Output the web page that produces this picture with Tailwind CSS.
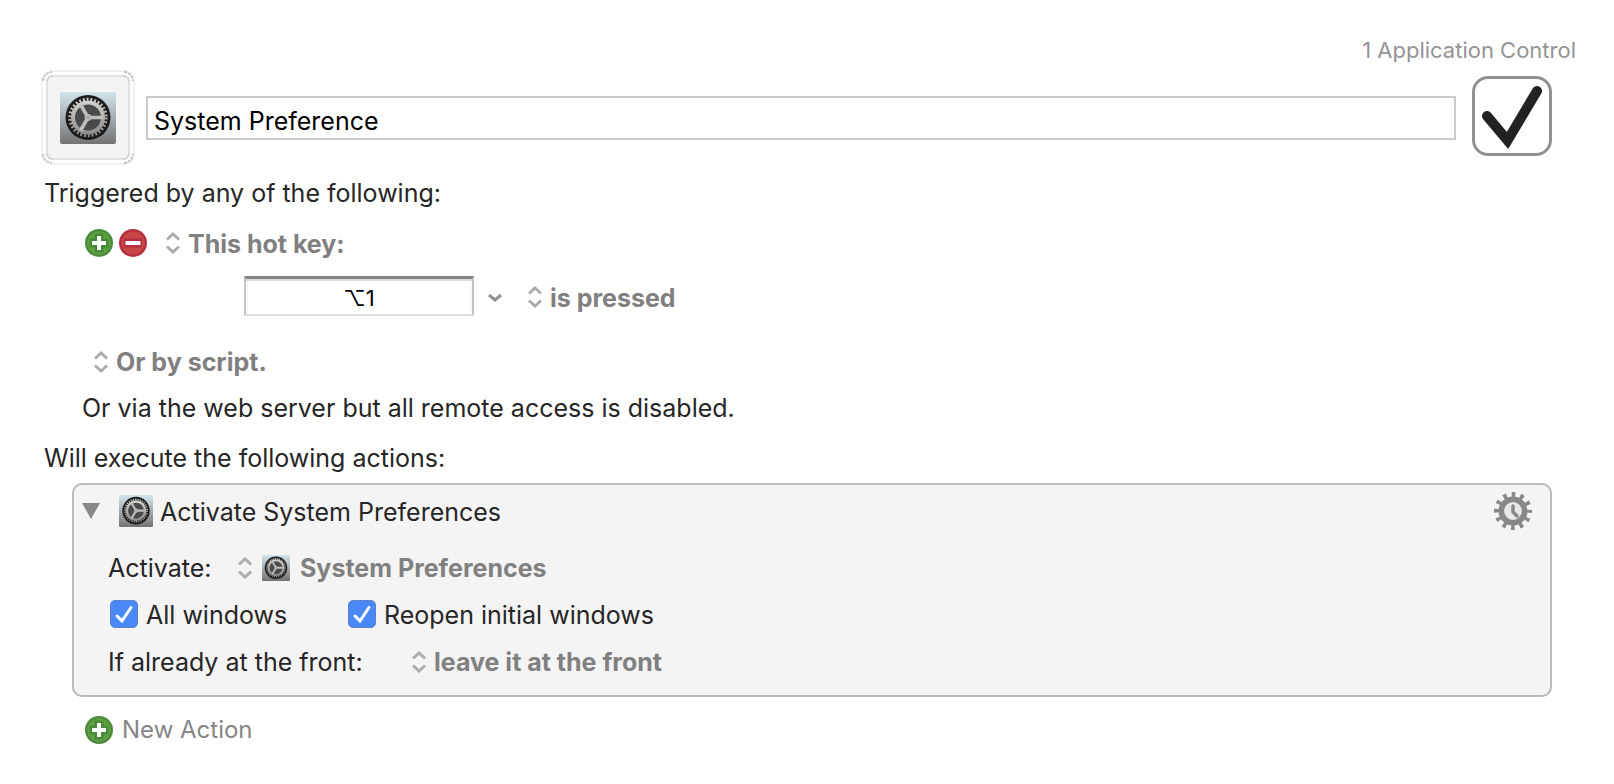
<!DOCTYPE html>
<html lang="en">
<head>
<meta charset="utf-8">
<title>System Preference</title>
<script src="https://cdn.jsdelivr.net/npm/@tailwindcss/browser@4"></script>
</head>
<body class="bg-white font-[Inter,'Liberation_Sans',sans-serif] text-[25px] leading-8 text-[#262626]">
<svg class="absolute size-0" aria-hidden="true">
  <defs>
    <linearGradient id="plate" x1="0" y1="0" x2="0" y2="1"><stop offset="0" stop-color="#d3e4ec"/><stop offset=".5" stop-color="#a4adb2"/><stop offset="1" stop-color="#727272"/></linearGradient>
    <linearGradient id="steel" x1="0" y1="0" x2="0" y2="1"><stop offset="0" stop-color="#d2d0cd"/><stop offset="1" stop-color="#92908e"/></linearGradient>
    <symbol id="prefs" viewBox="0 0 56 52" preserveAspectRatio="none">
      <rect width="56" height="52" rx="2" fill="url(#plate)"/>
      <circle cx="28" cy="25.500" r="22.500" fill="#1c1c1c"/>
      <circle cx="28" cy="25.500" r="18.200" fill="none" stroke="url(#steel)" stroke-width="3" stroke-dasharray="1.900 1.912"/>
      <circle cx="28" cy="25.500" r="15" fill="#4a4a4a" stroke="url(#steel)" stroke-width="4"/>
      <path d="M28 25.500H43M28 25.500L20.500 12.500M28 25.500L20.500 38.500" stroke="#c0bebb" stroke-width="3.600"/>
      <circle cx="28" cy="25.500" r="3.400" fill="#bcbab7"/><circle cx="28" cy="25.500" r="1.500" fill="#9fa3b0"/>
    </symbol>
    <symbol id="updown" viewBox="0 0 14 22">
      <path d="M1 7.500L7 2L13 7.500M1 14.500L7 20L13 14.500" fill="none" stroke="#acacac" stroke-width="3"/>
    </symbol>
    <symbol id="plus" viewBox="0 0 28 28">
      <circle cx="14" cy="14" r="14" fill="#4b8b3b"/><circle cx="14" cy="14" r="11.600" fill="#60a044"/>
      <path d="M9.500 4.500h9v5h5v9h-5v5h-9v-5h-5v-9h5z" fill="#488937"/>
      <path d="M12 7h4v5h5v4h-5v5h-4v-5H7v-4h5z" fill="#fff"/>
    </symbol>
    <symbol id="minus" viewBox="0 0 28 28">
      <circle cx="14" cy="14" r="14" fill="#b72d3d"/><circle cx="14" cy="14" r="11.600" fill="#c74747"/>
      <path d="M5 9.500h18v9H5z" fill="#b72d3d"/><path d="M6.500 12h15v4h-15z" fill="#fff"/>
    </symbol>
  </defs>
</svg>
<main class="pt-8 pr-[62px] pb-8 pl-[41px]">
  <p class="-mr-6 mb-1 pt-0.5 text-right text-[22px] text-[#949494]">1 Application Control</p>
  <header class="flex items-center">
    <button aria-label="Change icon" class="shrink-0">
      <svg class="block h-[95px] w-[94px]" viewBox="0 0 94 95" fill="none">
        <rect x="1" y="1" width="92" height="93" rx="10" stroke="#f0f0f0" stroke-width="2"/>
        <rect x="6" y="6" width="82" height="83" rx="6" fill="#f4f4f4" stroke="#e2e2e2" stroke-width="2"/>
        <g stroke="#c4c4c4" stroke-width="2" stroke-dasharray="3 1">
          <path d="M2 11Q3 3 11 2M83 2Q91 3 92 11M2 84Q3 92 11 93M83 93Q91 92 92 84"/>
          <path d="M6 12Q6 6 12 6M82 6Q88 6 88 12M6 83Q6 89 12 89M82 89Q88 89 88 83" stroke="#d2d2d2"/>
        </g>
        <use href="#prefs" x="19" y="22" width="56" height="52"/>
      </svg>
    </button>
    <input aria-label="Macro name" value="System Preference" class="ml-[11px] h-11 min-w-0 flex-1 border-2 border-[#cbcbcb] bg-white px-1.5 pt-1.5 text-black outline-none">
    <label class="relative ml-4 size-20 shrink-0 self-start mt-1.5">
      <input type="checkbox" checked aria-label="Enabled" class="block size-20 appearance-none rounded-2xl border-3 border-[#919191] bg-white">
      <svg class="pointer-events-none absolute inset-0 size-20" viewBox="0 0 80 80" fill="none" stroke="#222" stroke-width="10" stroke-linecap="round"><path d="M15 40L35.500 64.500L65 15" stroke-miterlimit="10"/></svg>
    </label>
  </header>

  <h2 class="mt-3 pl-[3px]">Triggered by any of the following:</h2>
  <div class="mt-[18px] flex h-8 items-center pl-11">
    <button aria-label="Add trigger"><svg class="block size-7"><use href="#plus"/></svg></button>
    <button aria-label="Remove trigger" class="ml-1.5"><svg class="block size-7"><use href="#minus"/></svg></button>
    <svg class="ml-[19px] h-[22px] w-3.5"><use href="#updown"/></svg>
    <select aria-label="Trigger type" class="ml-2 appearance-none pt-0.5 font-bold text-[#808080]"><option>This hot key:</option></select>
  </div>
  <div class="mt-[17px] flex h-10 items-center pl-[203px]">
    <input aria-label="Hot key" value="⌥1" class="h-10 w-[230px] border-2 border-t-3 border-[#c4c4c4] border-t-[#858585] border-b-[#dedede] bg-white pt-0.5 text-center text-[22px] text-black shadow-[inset_0_2px_0_#dcdcdc,inset_2px_0_0_#f7f7f7,inset_-2px_0_0_#f7f7f7] outline-none">
    <button aria-label="Hot key options" class="ml-3.5 pt-1"><svg class="block h-3 w-3.5" viewBox="0 0 14 12" fill="none" stroke="#929292" stroke-width="3"><path d="M1 3L7 8L13 3"/></svg></button>
    <svg class="ml-[26px] mt-0.5 h-[22px] w-3.5"><use href="#updown"/></svg>
    <select aria-label="Hot key event" class="ml-2 appearance-none pt-1 font-bold text-[#808080]"><option>is pressed</option></select>
  </div>
  <div class="mt-[30px] flex h-8 items-center pl-[53px]">
    <svg class="h-[22px] w-3.5"><use href="#updown"/></svg>
    <select aria-label="Script trigger" class="ml-2 appearance-none font-bold text-[#808080]"><option>Or by script.</option></select>
  </div>
  <p class="mt-3.5 pl-[41px]">Or via the web server but all remote access is disabled.</p>

  <h2 class="mt-[18px] pl-[3px]">Will execute the following actions:</h2>
  <section class="mt-[9px] ml-[31px] rounded-[10px] border-2 border-[#bababa] bg-[#f4f4f4] pt-2.5 pr-[18px] pb-[17px] pl-2">
    <div class="flex h-8 items-center">
      <button aria-label="Collapse action"><svg class="block h-4 w-[18px]" viewBox="0 0 18 16"><path d="M0 0H18L9 16Z" fill="#888"/></svg></button>
      <svg class="ml-[19px] h-8 w-[34px]"><use href="#prefs"/></svg>
      <h3 class="ml-[7px] flex-1 pt-0.5">Activate System Preferences</h3>
      <button aria-label="Action options">
        <svg class="block size-[38px]" viewBox="-19 -19 38 38">
          <circle r="16.500" fill="none" stroke="#888" stroke-width="5" stroke-dasharray="3.640 5" stroke-dashoffset="1.820"/>
          <circle r="11.700" fill="#e8e8e8" stroke="#888" stroke-width="5.600"/>
          <path d="M0 -5V1L4 5" fill="none" stroke="#888" stroke-width="3.500" stroke-linecap="round"/>
        </svg>
      </button>
    </div>
    <div class="mt-[25px] flex h-8 items-center pl-[26px]">
      <span class="w-[130px]">Activate:</span>
      <svg class="h-[22px] w-3.5"><use href="#updown"/></svg>
      <svg class="ml-2.5 h-[26px] w-7"><use href="#prefs"/></svg>
      <select aria-label="Application" class="ml-2.5 appearance-none font-bold text-[#808080]"><option>System Preferences</option></select>
    </div>
    <div class="mt-3.5 flex h-8 items-center pl-7">
      <label class="flex w-[238px] items-center gap-2">
        <span class="relative size-7 shrink-0"><input type="checkbox" checked class="block size-7 appearance-none rounded-[5px] border border-[#5a82c8] bg-[#4a88f7]"><svg class="pointer-events-none absolute inset-0 size-7" viewBox="0 0 28 28" fill="none" stroke="#fff" stroke-width="3" stroke-linecap="round"><path d="M7 16L12 21L21 7.500"/></svg></span><span class="pt-0.5">All windows</span></label>
      <label class="flex items-center gap-2">
        <span class="relative size-7 shrink-0"><input type="checkbox" checked class="block size-7 appearance-none rounded-[5px] border border-[#5a82c8] bg-[#4a88f7]"><svg class="pointer-events-none absolute inset-0 size-7" viewBox="0 0 28 28" fill="none" stroke="#fff" stroke-width="3" stroke-linecap="round"><path d="M7 16L12 21L21 7.500"/></svg></span><span class="pt-0.5">Reopen initial windows</span></label>
    </div>
    <div class="mt-4 flex h-8 items-center pl-[26px]">
      <span class="w-[304px]">If already at the front:</span>
      <svg class="h-[22px] w-3.5"><use href="#updown"/></svg>
      <select aria-label="Front behavior" class="ml-2 appearance-none font-bold text-[#808080]"><option>leave it at the front</option></select>
    </div>
  </section>
  <button class="mt-[17px] ml-11 flex h-8 items-center gap-[9px] text-2xl text-[#868686]"><svg class="size-7"><use href="#plus"/></svg>New Action</button>
</main>
</body>
</html>
